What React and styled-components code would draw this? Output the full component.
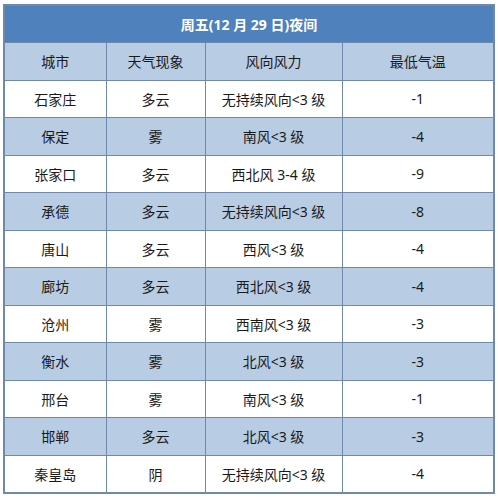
import styled, { createGlobalStyle } from 'styled-components';

const rows = [
  ["石家庄", "多云", "无持续风向<3 级", "-1"],
  ["保定", "雾", "南风<3 级", "-4"],
  ["张家口", "多云", "西北风 3-4 级", "-9"],
  ["承德", "多云", "无持续风向<3 级", "-8"],
  ["唐山", "多云", "西风<3 级", "-4"],
  ["廊坊", "多云", "西北风<3 级", "-4"],
  ["沧州", "雾", "西南风<3 级", "-3"],
  ["衡水", "雾", "北风<3 级", "-3"],
  ["邢台", "雾", "南风<3 级", "-1"],
  ["邯郸", "多云", "北风<3 级", "-3"],
  ["秦皇岛", "阴", "无持续风向<3 级", "-4"],
];

const GlobalStyle = createGlobalStyle`
  body {
    margin: 0;
    background: #ffffff;
    font-family: "Noto Sans", "Noto Sans CJK SC", sans-serif;
  }
`;

const Page = styled.div`
  padding: 4px 3px 0 3px;
`;

const Table = styled.table`
  width: 492px;
  border-collapse: collapse;
  table-layout: fixed;
  border: 2px solid #6f89ad;
`;

const Title = styled.th`
  height: 36px;
  padding: 0;
  background: #4f81bd;
  color: #ffffff;
  font-size: 14px;
  font-weight: 700;
  text-align: center;
  border-bottom: 1px solid #6f89ad;
`;

const Head = styled.td`
  height: 36.6px;
  padding: 0;
  background: #b8cce4;
  color: #1a1a1a;
  font-size: 14px;
  text-align: center;
  border: 1px solid #6f89ad;
`;

const Cell = styled.td`
  height: 36.5px;
  padding: 0;
  background: ${p => (p.$striped ? "#b8cce4" : "#ffffff")};
  color: #1a1a1a;
  font-size: 14px;
  text-align: center;
  border: 1px solid #6f89ad;
`;

const App = () => {
  return <Page>
    <GlobalStyle />
    <Table>
      <colgroup>
        <col style={{ width: 102 }} />
        <col style={{ width: 99 }} />
        <col style={{ width: 137 }} />
        <col style={{ width: 152 }} />
      </colgroup>
      <thead>
        <tr><Title colSpan={4}>周五(12 月 29 日)夜间</Title></tr>
      </thead>
      <tbody>
        <tr>
          <Head>城市</Head>
          <Head>天气现象</Head>
          <Head>风向风力</Head>
          <Head>最低气温</Head>
        </tr>
        {rows.map((r, i) => (
          <tr key={r[0]}>
            {r.map((c, j) => <Cell key={j} $striped={i % 2 === 1}>{c}</Cell>)}
          </tr>
        ))}
      </tbody>
    </Table>
  </Page>;
};

export default App;
